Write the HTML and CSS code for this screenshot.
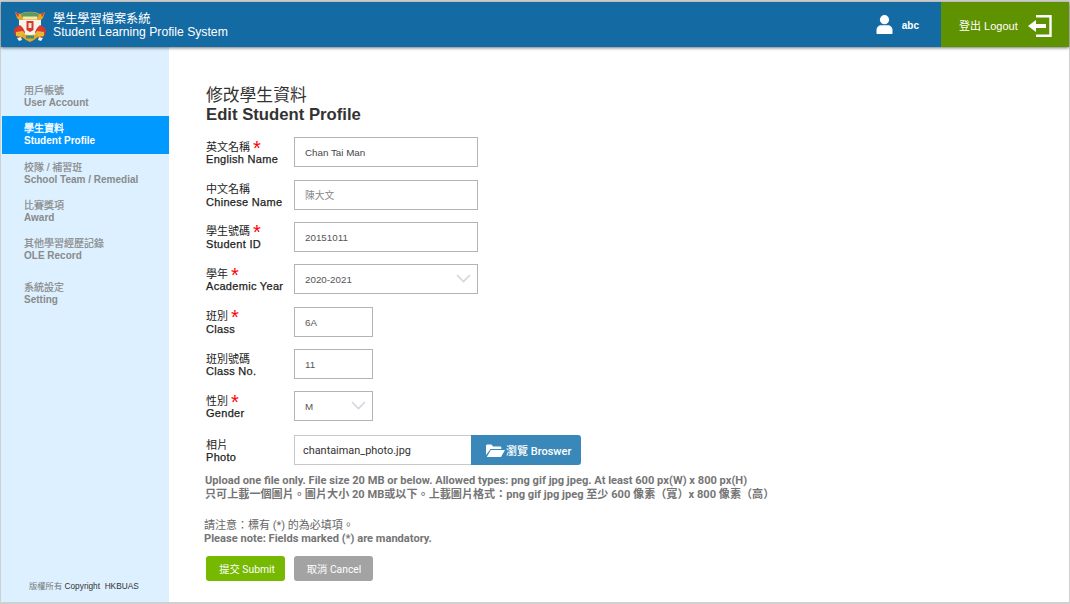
FILE: index.html
```html
<!DOCTYPE html>
<html lang="zh-Hant">
<head>
<meta charset="utf-8">
<title>Student Learning Profile System</title>
<link rel="stylesheet" href="styles.css">
</head>
<body>
<div class="frame">
  <header class="topbar">
    <div class="brand">
      <svg class="logo" width="32" height="34" viewBox="0 0 32 34">
        <path d="M1 3l5 2c5-3 15-3 20 0l5-2-2 6-3 3H6L3 9z" fill="#e3a62a"/>
        <path d="M1 3l4 2-1 3zM31 3l-4 2 1 3z" fill="#d8382f"/>
        <path d="M7 5c5-2.500 13-2.500 18 0l-1 3H8z" fill="#5b9a63"/>
        <path d="M9 7.500h14v3H9z" fill="#f2e6a8"/>
        <path d="M5 11h22v12c-3 3-7 5-11 6-4-1-8-3-11-6z" fill="#f7f3ee"/>
        <path d="M12.500 12h7v9l-3.500 2-3.500-2z" fill="#d9362c"/>
        <path d="M14.500 14h3v5h-3z" fill="#f8e9d0"/>
        <path d="M1 19l5-3 3 3 2 4-2 5-4 1-4-3-1-4z" fill="#d8382f"/>
        <path d="M31 19l-5-3-3 3-2 4 2 5 4 1 4-3 1-4z" fill="#d8382f"/>
        <path d="M2 23l7-1 2 3-3 3-6-1z" fill="#eab82c"/>
        <path d="M30 23l-7-1-2 3 3 3 6-1z" fill="#eab82c"/>
        <path d="M9 25c4 1.500 10 1.500 14 0l1 3-4 3-4 2-4-2-4-3z" fill="#e0a92a"/>
        <path d="M12 26.500h8v3h-8z" fill="#4a8d6a"/>
        <path d="M3 29l4-1 1 3-3 1zM29 29l-4-1-1 3 3 1z" fill="#f4efe8"/>
      </svg>
      <div class="brand-text">
        <div>學生學習檔案系統</div>
        <div>Student Learning Profile System</div>
      </div>
    </div>
    <div class="user">
      <svg width="17" height="19" viewBox="0 0 17 19"><circle cx="8.500" cy="4.700" r="4.600" fill="#fff"/><path d="M0.500 18.500v-3.500c0-3 2.500-4.800 4.500-4.800h7c2 0 4.500 1.800 4.500 4.800v3.500c0 .3-.2.500-.5.500H1c-.3 0-.5-.2-.5-.5z" fill="#fff"/></svg>
      <span class="user-name">abc</span>
    </div>
    <a class="logout">
      <span>登出 Logout</span>
      <svg class="logout-icon" width="25" height="22" viewBox="0 0 25 22"><path d="M9 1.200h14.500v19.600H9" fill="none" stroke="#fff" stroke-width="2.400"/><path d="M19 9H9V5L1 11l8 6v-4h10z" fill="#fff"/></svg>
    </a>
  </header>
  <div class="main">
    <aside class="sidebar">
      <nav class="nav">
        <a class="nav-item n1"><span>用戶帳號</span><span>User Account</span></a>
        <a class="nav-item active"><span>學生資料</span><span>Student Profile</span></a>
        <a class="nav-item n3"><span>校隊 / 補習班</span><span>School Team / Remedial</span></a>
        <a class="nav-item n4"><span>比賽獎項</span><span>Award</span></a>
        <a class="nav-item n5"><span>其他學習經歷記錄</span><span>OLE Record</span></a>
        <a class="nav-item n6"><span>系統設定</span><span>Setting</span></a>
      </nav>
      <div class="copyright"><span class="cr-zh">版權所有</span> Copyright&nbsp; HKBUAS</div>
    </aside>
    <main class="content">
      <h1 class="title"><span class="title-zh">修改學生資料</span><span>Edit Student Profile</span></h1>
      <form class="form">
        <div class="row"><label class="label"><span>英文名稱 <b class="req">*</b></span><span>English Name</span></label><div class="input wide dark">Chan Tai Man</div></div>
        <div class="row"><label class="label"><span>中文名稱</span><span>Chinese Name</span></label><div class="input wide muted">陳大文</div></div>
        <div class="row"><label class="label"><span>學生號碼 <b class="req">*</b></span><span>Student ID</span></label><div class="input wide">20151011</div></div>
        <div class="row"><label class="label"><span>學年 <b class="req">*</b></span><span>Academic Year</span></label><div class="input wide select">2020-2021<svg class="chev" width="15" height="9" viewBox="0 0 15 9"><path d="M1 1l6.500 6.500L14 1" fill="none" stroke="#d3d6de" stroke-width="1.600"/></svg></div></div>
        <div class="row"><label class="label"><span>班別 <b class="req">*</b></span><span>Class</span></label><div class="input narrow">6A</div></div>
        <div class="row"><label class="label"><span>班別號碼</span><span>Class No.</span></label><div class="input narrow">11</div></div>
        <div class="row"><label class="label"><span>性別 <b class="req">*</b></span><span>Gender</span></label><div class="input narrow select">M<svg class="chev" width="15" height="9" viewBox="0 0 15 9"><path d="M1 1l6.500 6.500L14 1" fill="none" stroke="#d3d6de" stroke-width="1.600"/></svg></div></div>
        <div class="row photo-row"><label class="label"><span>相片</span><span>Photo</span></label>
          <div class="file">
            <div class="file-name">chantaiman_photo.jpg</div>
            <div class="browse">
              <svg width="19" height="13" viewBox="0 0 19 13"><path d="M0 2c0-1 .6-1.500 1.400-1.500h4L7 2.500h7c.8 0 1.300.5 1.300 1.200V5H4.500L0 11z" fill="#fff"/><path d="M4.800 6H19l-4 7H.8z" fill="#fff"/></svg>
              <span>瀏覽 Broswer</span>
            </div>
          </div>
        </div>
        <p class="hint">Upload one file only. File size 20 MB or below. Allowed types: png gif jpg jpeg. At least 600 px(W) x 800 px(H)<br>只可上載一個圖片。圖片大小 20 MB或以下。上載圖片格式：png gif jpg jpeg 至少 600 像素（寬）x 800 像素（高）</p>
        <p class="note"><span class="note-zh">請注意：標有 (*) 的為必填項。</span><br>Please note: Fields marked (*) are mandatory.</p>
        <div class="actions">
          <button type="button" class="btn submit">提交 Submit</button>
          <button type="button" class="btn cancel">取消 Cancel</button>
        </div>
      </form>
    </main>
  </div>
</div>
</body>
</html>
```
FILE: styles.css
```css
* { box-sizing: border-box; }
html, body { margin: 0; padding: 0; height: 100%; overflow: hidden; }
body {
  font-family: "Liberation Sans", "Noto Sans CJK TC", sans-serif;
  background: #fff;
}
.frame {
  width: 1070px;
  height: 604px;
  border: 1px solid #d0d0d0;
  border-top-width: 2px;
  border-bottom-width: 2px;
  display: flex;
  flex-direction: column;
}
.topbar {
  height: 45px;
  flex: none;
  background: #146ba4;
  color: #fff;
  display: flex;
  align-items: center;
  box-shadow: 0 1px 3px rgba(0,0,0,.55);
  position: relative;
  z-index: 1;
}
.brand { display: flex; align-items: center; padding-left: 13px; flex: 1; }
.logo { flex: none; margin-top: 3px; }
.brand-text {
  margin-left: 7px;
  font-size: 12.200px;
  line-height: 13px;
  margin-top: 3px;
}
.user { display: flex; align-items: center; gap: 9px; margin-right: 22px; }
.user-name { font-size: 10px; font-weight: bold; position: relative; top: 1px; }
.logout {
  width: 128px;
  height: 45px;
  background: #5f9200;
  display: flex;
  align-items: center;
  font-size: 11px;
  padding-left: 18px;
  gap: 9px;
}
.logout-icon { flex: none; position: relative; top: 1px; }
.main { flex: 1; display: flex; min-height: 0; }
.sidebar {
  width: 168px;
  flex: none;
  background: #ddf0ff;
  display: flex;
  flex-direction: column;
  justify-content: space-between;
  padding-top: 38px;
}
.nav { display: flex; flex-direction: column; }
.nav-item {
  display: flex;
  flex-direction: column;
  padding-left: 23px;
  font-size: 10px;
  line-height: 12px;
  font-weight: bold;
  color: #8a8a8a;
}
.nav-item span:first-child { font-weight: normal; -webkit-text-stroke: .2px #8a8a8a; }
.nav-item.active {
  background: #0099ff;
  color: #fff;
  height: 38px;
  margin: 7px 0 0 1px;
  padding-left: 22px;
  padding-top: 7px;
}
.nav-item.active span:first-child { -webkit-text-stroke: .3px #fff; }
.n3 { margin-top: 8px; }
.n4 { margin-top: 14px; }
.n5 { margin-top: 14px; }
.n6 { margin-top: 20px; }
.copyright {
  font-size: 8.300px;
  line-height: 12px;
  color: #333;
  padding-left: 28px;
  padding-bottom: 10px;
}
.cr-zh { color: #777; }
.content { flex: 1; padding: 39px 0 0 37px; }
.title {
  margin: 0 0 13.300px;
  display: flex;
  flex-direction: column;
  font-size: 16.700px;
  line-height: 19px;
  font-weight: bold;
  color: #333;
}
.title-zh { font-weight: normal; font-size: 16.800px; }
.form { display: flex; flex-direction: column; }
.row { display: flex; align-items: center; height: 30px; margin-bottom: 12.350px; }
.label {
  width: 88px;
  flex: none;
  display: flex;
  flex-direction: column;
  font-size: 11px;
  line-height: 12.500px;
  color: #222;
  padding-top: 2px;
}
.label span:last-child { font-weight: normal; -webkit-text-stroke: .25px #222; letter-spacing: .3px; }
.req {
  color: #f00;
  font-size: 20px;
  line-height: 0;
  font-weight: normal;
  vertical-align: -4px;
}
.input {
  height: 30px;
  border: 1px solid #b4b4b4;
  background: #fff;
  display: flex;
  align-items: center;
  padding: 1px 0 0 10px;
  font-size: 9.800px;
  color: #555;
  justify-content: space-between;
}
.input.dark { color: #444; }
.input.muted { color: #888; }
.wide { width: 184px; }
.narrow { width: 79px; }
.select { padding-right: 6px; }
.chev { margin-bottom: 2px; }
.photo-row { margin-bottom: 0; margin-top: 1.350px; }
.file { display: flex; width: 287px; height: 30px; }
.file-name {
  width: 177px;
  border: 1px solid #c8c8c8;
  border-right: 0;
  display: flex;
  align-items: center;
  padding-left: 8px;
  font-size: 10.900px;
  color: #333;
  font-family: "Roboto", "Noto Sans CJK TC", sans-serif;
}
.browse {
  width: 110px;
  background: #3a88b9;
  border-radius: 0 3px 3px 0;
  color: #fff;
  display: flex;
  align-items: center;
  padding-left: 15px;
  gap: 1px;
  font-size: 11px;
  font-family: "Roboto", "Noto Sans CJK TC", sans-serif;
  font-weight: 500;
}
.hint, .note {
  margin: 0 0 0 -2px;
  font-family: "Roboto", "Noto Sans CJK TC", sans-serif;
  font-size: 11.100px;
  line-height: 14px;
  font-weight: 700;
  color: #757575;
}
.hint { margin-top: 9px; margin-left: -1px; }
.note { margin-top: 17px; line-height: 13px; }
.note-zh { font-weight: 400; color: #666; font-size: 11px; }
.actions { display: flex; gap: 9px; margin-top: 11px; }
.btn {
  width: 79px;
  height: 25px;
  border: 0;
  border-radius: 3px;
  color: #fff;
  font-family: "Roboto", "Noto Sans CJK TC", sans-serif;
  font-size: 10.300px;
}
.submit { background: #76b900; padding: 0 0 0 3px; }
.cancel { background: #a3a3a3; padding: 0 0 0 1px; }
```
